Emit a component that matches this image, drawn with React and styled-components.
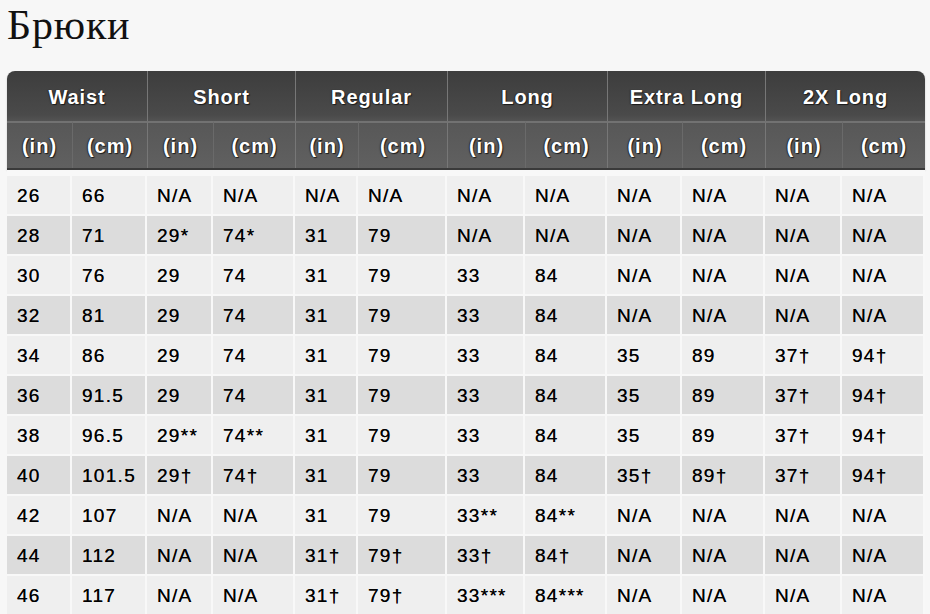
import React from "react";
import styled, { createGlobalStyle } from "styled-components";

const Global = createGlobalStyle`
  html, body { margin: 0; padding: 0; background: #f7f7f7; }
  body { font-family: "Liberation Sans", Arial, sans-serif; }
`;

const Page = styled.div`
  width: 930px;
  height: 614px;
  overflow: hidden;
  padding-left: 7px;
  box-sizing: border-box;
  background: #f7f7f7;
`;

const Title = styled.h1`
  margin: 0;
  height: 71px;
  box-sizing: border-box;
  padding-top: 2px;
  font-family: "Liberation Serif", "Times New Roman", serif;
  font-weight: normal;
  font-size: 42px;
  letter-spacing: 0.8px;
  line-height: 46px;
  color: #111;
`;

const COLS = "65px 75px 66px 82px 63px 89px 78px 82px 75px 83px 77px 83px";

const Table = styled.div`
  width: 918px;
`;

const Head = styled.div`
  display: grid;
  grid-template-columns: ${COLS};
  grid-template-rows: 50px 47px;
  border-radius: 8px 8px 0 0;
  overflow: hidden;
  background: linear-gradient(#3d3d3d 0%, #4a4a4a 45%, #585858 55%, #606060 100%);
  border-bottom: 2px solid #3a3a3a;
  box-shadow: 0 1px 2px rgba(0, 0, 0, 0.2);
`;

const HeadCell = styled.div`
  grid-column: span ${(p) => p.$span || 1};
  display: flex;
  align-items: center;
  justify-content: center;
  color: #fff;
  font-weight: bold;
  font-size: 20px;
  letter-spacing: ${(p) => (p.$sub ? "1px" : "0.9px")};
  text-shadow: 1px 1px 1px #1a1a1a, -1px 0 1px #2a2a2a;
  box-sizing: border-box;
  border-left: ${(p) => (p.$first ? "none" : p.$sub && !p.$group ? "1px solid #6a6a6a" : "1px solid #777")};
  border-top: ${(p) => (p.$sub ? "2px solid #727272" : "none")};
  padding-top: ${(p) => (p.$sub ? "1px" : "2px")};
`;

const Body = styled.div`
  display: grid;
  grid-template-columns: ${COLS};
  grid-auto-rows: 38px;
  row-gap: 2px;
  padding-top: 6px;
  background: #f8f8f8;
`;

const Cell = styled.div`
  display: flex;
  align-items: center;
  padding-left: 10px;
  padding-top: 1px;
  margin-right: 2px;
  background: ${(p) => (p.$alt ? "#dcdcdc" : "#efefef")};
  color: #000;
  font-size: 19px;
  letter-spacing: 1.3px;
  white-space: nowrap;
  text-shadow: 0 0 0.3px #222;
`;

const groups = ["Waist", "Short", "Regular", "Long", "Extra Long", "2X Long"];

const rows = [
  ["26", "66", "N/A", "N/A", "N/A", "N/A", "N/A", "N/A", "N/A", "N/A", "N/A", "N/A"],
  ["28", "71", "29*", "74*", "31", "79", "N/A", "N/A", "N/A", "N/A", "N/A", "N/A"],
  ["30", "76", "29", "74", "31", "79", "33", "84", "N/A", "N/A", "N/A", "N/A"],
  ["32", "81", "29", "74", "31", "79", "33", "84", "N/A", "N/A", "N/A", "N/A"],
  ["34", "86", "29", "74", "31", "79", "33", "84", "35", "89", "37†", "94†"],
  ["36", "91.5", "29", "74", "31", "79", "33", "84", "35", "89", "37†", "94†"],
  ["38", "96.5", "29**", "74**", "31", "79", "33", "84", "35", "89", "37†", "94†"],
  ["40", "101.5", "29†", "74†", "31", "79", "33", "84", "35†", "89†", "37†", "94†"],
  ["42", "107", "N/A", "N/A", "31", "79", "33**", "84**", "N/A", "N/A", "N/A", "N/A"],
  ["44", "112", "N/A", "N/A", "31†", "79†", "33†", "84†", "N/A", "N/A", "N/A", "N/A"],
  ["46", "117", "N/A", "N/A", "31†", "79†", "33***", "84***", "N/A", "N/A", "N/A", "N/A"],
];

export default function App() {
  return (
    <Page>
      <Global />
      <Title>Брюки</Title>
      <Table>
        <Head>
          {groups.map((g, i) => (
            <HeadCell key={g} $span={2} $first={i === 0}>
              {g}
            </HeadCell>
          ))}
          {groups.map((g, i) => (
            <React.Fragment key={g + "-sub"}>
              <HeadCell $sub $group $first={i === 0}>(in)</HeadCell>
              <HeadCell $sub>(cm)</HeadCell>
            </React.Fragment>
          ))}
        </Head>
        <Body>
          {rows.map((r, ri) =>
            r.map((v, ci) => (
              <Cell key={ri + "-" + ci} $alt={ri % 2 === 1}>
                {v}
              </Cell>
            ))
          )}
        </Body>
      </Table>
    </Page>
  );
}
